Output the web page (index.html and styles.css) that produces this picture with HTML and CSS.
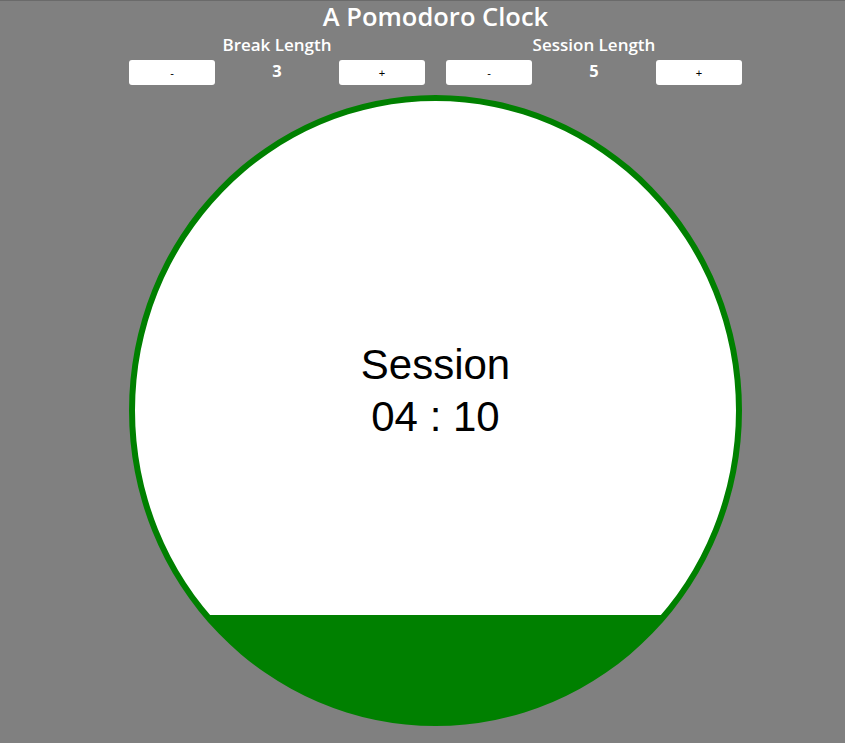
FILE: index.html
```html
<!DOCTYPE html>
<html>
<head>
<meta charset="utf-8">
<link rel="stylesheet" href="styles.css">
</head>
<body>
<div class="app">
  <h1 class="title">A Pomodoro Clock</h1>
  <div class="controls">
    <div class="group">
      <div class="label">Break Length</div>
      <div class="row">
        <button class="btn">-</button>
        <span class="value">3</span>
        <button class="btn">+</button>
      </div>
    </div>
    <div class="group">
      <div class="label">Session Length</div>
      <div class="row">
        <button class="btn">-</button>
        <span class="value">5</span>
        <button class="btn">+</button>
      </div>
    </div>
  </div>
  <div class="clock" style="--fill:17%">
    <div class="readout">
      <div class="mode">Session</div>
      <div class="time">04 : 10</div>
    </div>
  </div>
</div>
</body>
</html>
```
FILE: styles.css
```css
html, body {
  margin: 0;
  padding: 0;
  background: #808080;
  height: 100%;
  overflow: hidden;
}
body {
  border-top: 1px solid #6a6a6a;
  box-sizing: border-box;
  font-family: "Open Sans", "Liberation Sans", sans-serif;
}
.app {
  width: 613px;
  margin-left: calc(50% - 293.5px);
  display: flex;
  flex-direction: column;
}
.title {
  margin: 0;
  color: #fff;
  font-size: 25.5px;
  font-weight: 600;
  line-height: 30px;
  text-align: center;
}
.controls {
  display: flex;
  gap: 21px;
  margin-top: 2px;
}
.group {
  flex: 1;
  display: flex;
  flex-direction: column;
}
.label {
  color: #fff;
  font-size: 17px;
  font-weight: 600;
  text-align: center;
  line-height: 23px;
}
.row {
  display: flex;
  align-items: center;
  margin-top: 4px;
}
.btn {
  width: 86px;
  height: 25px;
  background: #fff;
  border: none;
  border-radius: 3px;
  font-family: "Liberation Sans", sans-serif;
  font-size: 11px;
  color: #000;
  padding: 0;
}
.value {
  flex: 1;
  text-align: center;
  color: #fff;
  font-weight: 700;
  font-size: 16.5px;
  position: relative;
  top: -2px;
}
.clock {
  margin-top: 10px;
  width: 613px;
  height: 631px;
  box-sizing: border-box;
  border: 6px solid #008000;
  border-radius: 50%;
  background: linear-gradient(to top, #008000 var(--fill), #fff var(--fill));
  display: flex;
  align-items: center;
  justify-content: center;
}
.readout {
  text-align: center;
  font-family: "Liberation Sans", Arial, sans-serif;
  font-size: 42px;
  line-height: 52px;
  color: #000;
  margin-bottom: 40px;
}
```
